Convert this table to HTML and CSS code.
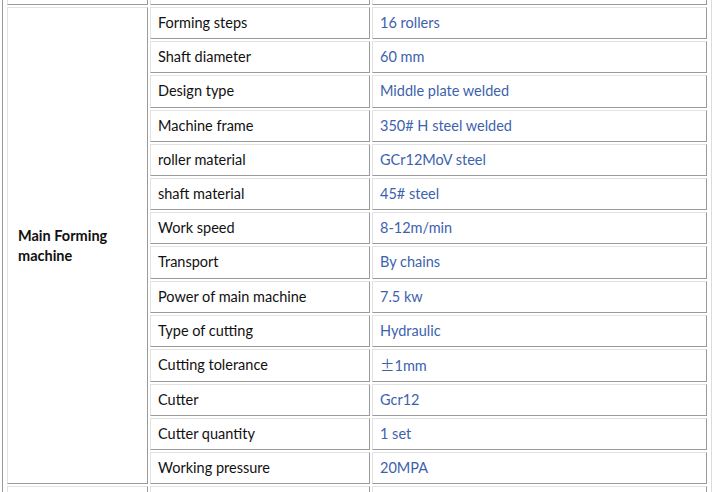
FILE: index.html
```html
<!DOCTYPE html>
<html>
<head>
<meta charset="utf-8">
<link rel="stylesheet" href="styles.css">
</head>
<body>
<div class="frame">
<table class="spec">
  <tr class="stub"><td class="c1"></td><td class="c2"></td><td class="c3"></td></tr>
  <tr><td class="c1 group" rowspan="14">Main Forming machine</td><td class="c2">Forming steps</td><td class="c3">16 rollers</td></tr>
  <tr><td class="c2">Shaft diameter</td><td class="c3">60 mm</td></tr>
  <tr><td class="c2">Design type</td><td class="c3">Middle plate welded</td></tr>
  <tr><td class="c2">Machine frame</td><td class="c3">350# H steel welded</td></tr>
  <tr><td class="c2">roller material</td><td class="c3">GCr12MoV steel</td></tr>
  <tr><td class="c2">shaft material</td><td class="c3">45# steel</td></tr>
  <tr><td class="c2">Work speed</td><td class="c3">8-12m/min</td></tr>
  <tr><td class="c2">Transport</td><td class="c3">By chains</td></tr>
  <tr><td class="c2">Power of main machine</td><td class="c3">7.5 kw</td></tr>
  <tr><td class="c2">Type of cutting</td><td class="c3">Hydraulic</td></tr>
  <tr><td class="c2">Cutting tolerance</td><td class="c3"><span class="cjk">±</span>1mm</td></tr>
  <tr><td class="c2">Cutter</td><td class="c3">Gcr12</td></tr>
  <tr><td class="c2">Cutter quantity</td><td class="c3">1 set</td></tr>
  <tr><td class="c2">Working pressure</td><td class="c3">20MPA</td></tr>
  <tr class="stub"><td class="c1"></td><td class="c2"></td><td class="c3"></td></tr>
</table>
</div>
</body>
</html>
```
FILE: styles.css
```css
html, body {
  margin: 0;
  padding: 0;
  background: #ffffff;
}
.frame {
  height: 492px;
  overflow: hidden;
}
.spec {
  margin: -42px 0 0 2px;
  width: 708px;
  border-collapse: separate;
  border-spacing: 2px;
  padding: 2px;
  border: 1px solid;
  border-color: #9a9a9a #dcdcdc #dcdcdc #9a9a9a;
  table-layout: fixed;
  font-family: Lato, "Noto Sans", sans-serif;
  font-size: 14.5px;
  color: #111111;
}
.spec td {
  border: 1px solid;
  border-color: #e2e2e2 #9a9a9a #9a9a9a #e2e2e2;
  padding: 5px 7px;
  height: 20.2px;
  line-height: 20px;
  box-sizing: content-box;
  vertical-align: middle;
  white-space: nowrap;
}
.spec .c1 { width: 125px; }
.spec .c2 { width: 204px; }
.spec .c3 { width: 319px; color: #3d62ad; }
.spec .stub td { height: 30px; }
.spec td.group {
  font-weight: bold;
  white-space: normal;
  padding-left: 10px;
  padding-right: 4px;
  line-height: 20px;
}
.cjk {
  font-family: "Noto Sans CJK SC", sans-serif;
}
```
